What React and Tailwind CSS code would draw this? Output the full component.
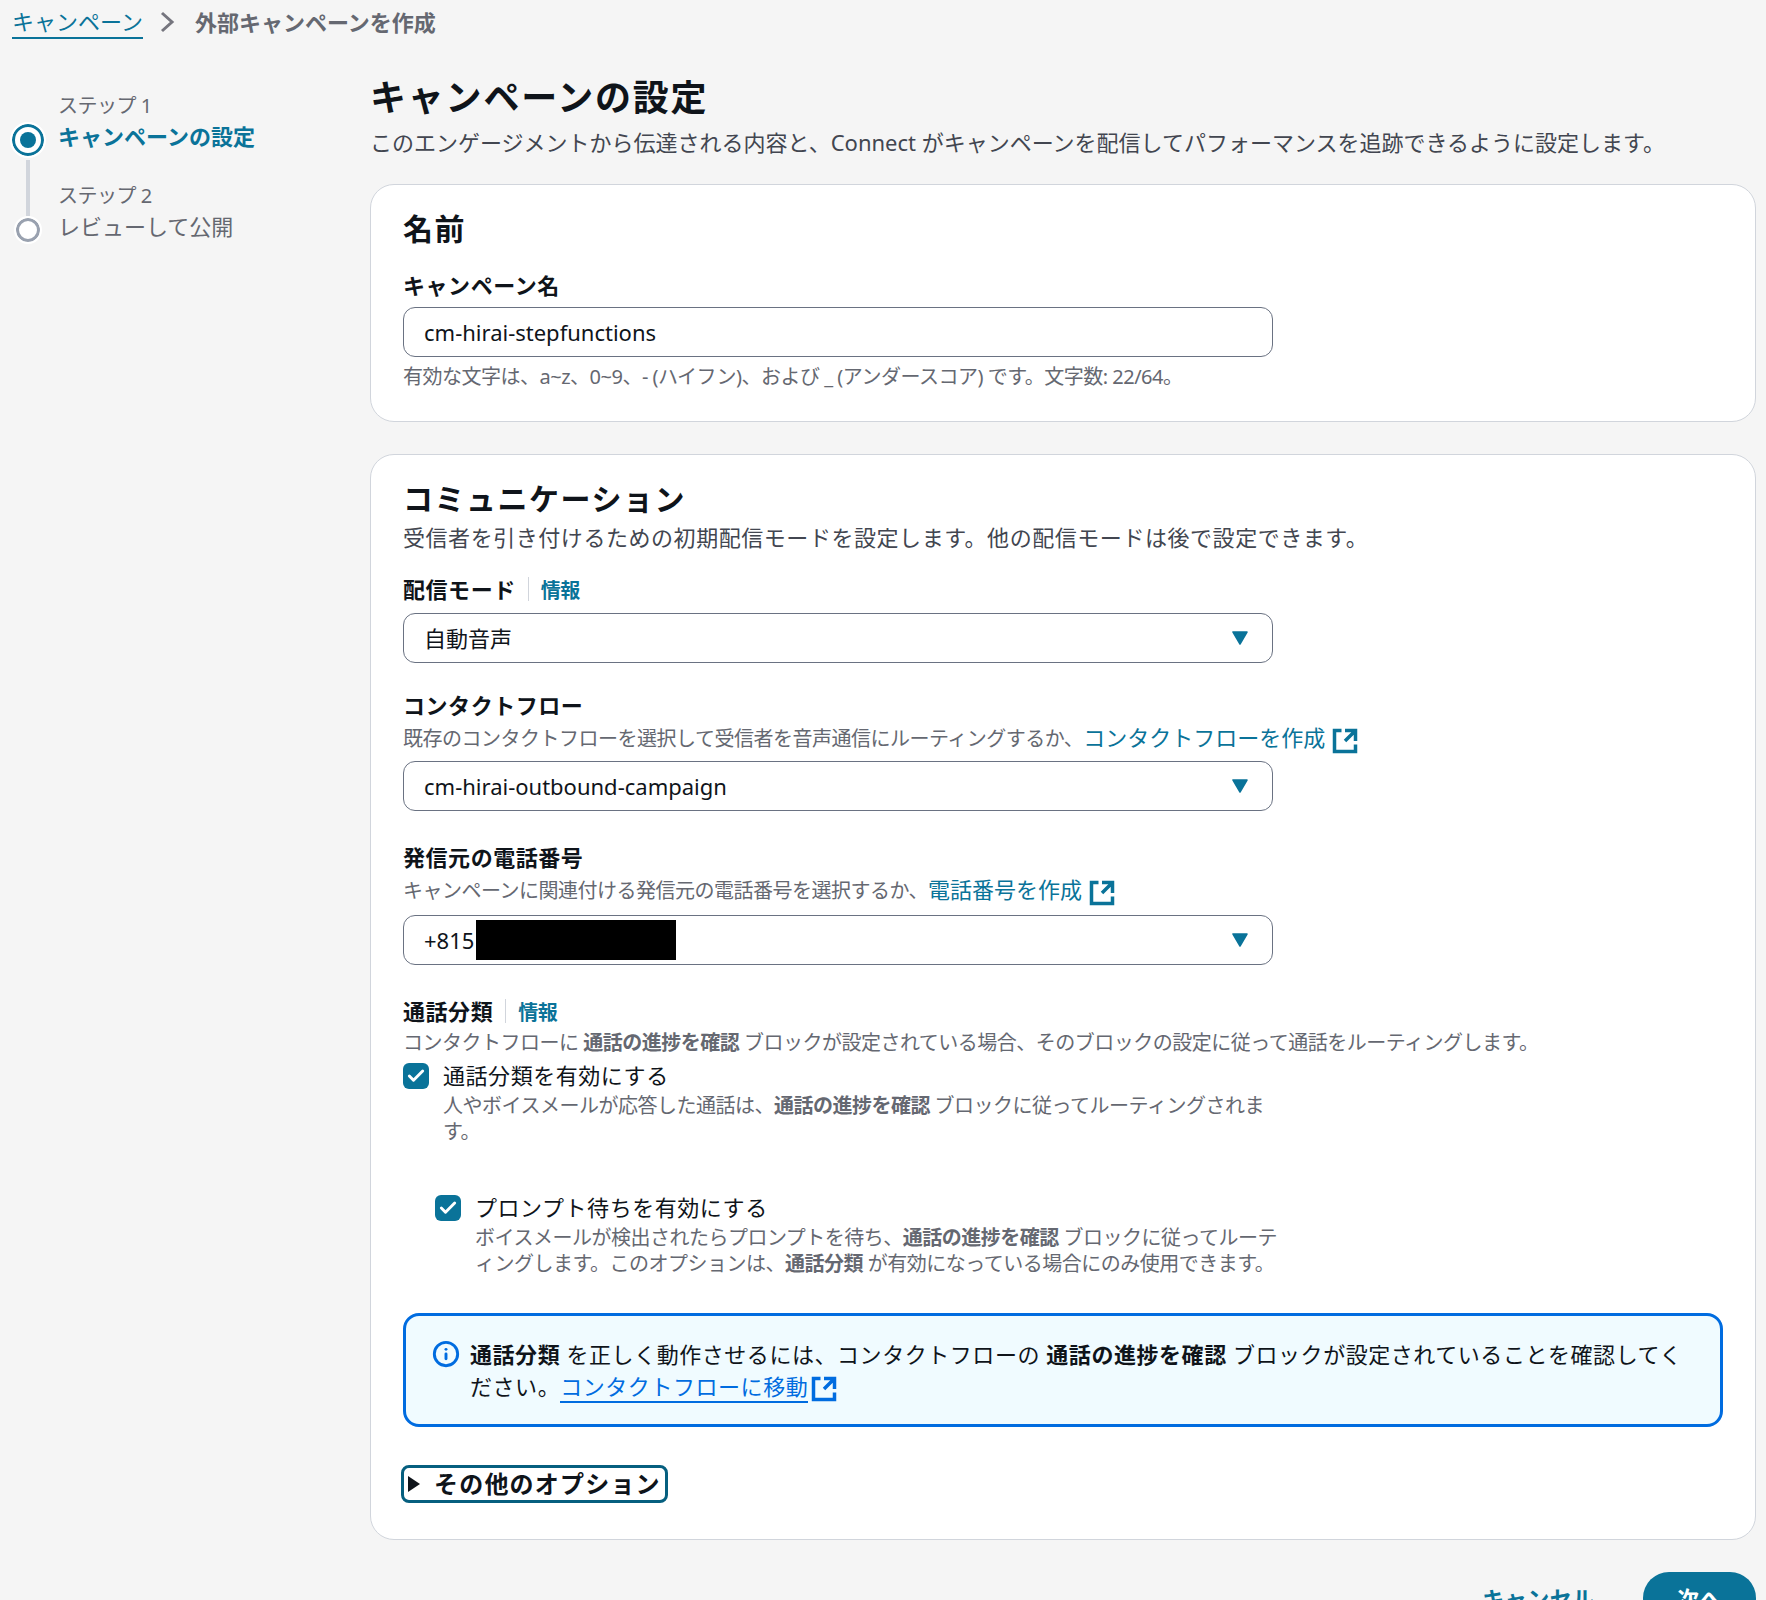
import { Check, Info } from "lucide-react";

// the screenshot is a scaled one, so its base text sits between text-xl and text-2xl
const bodyText = "text-[22px] leading-7 tracking-wide";
const smallText = "text-xl leading-6 tracking-tight text-[#656871]";
const labelText = "text-[22px] leading-7 font-bold tracking-wide text-[#0f141a]";

const ExternalIcon = ({ className }) => (
  <svg viewBox="0 0 16 16" fill="none" stroke="currentColor" strokeWidth={2} className={`-my-1 inline size-7 ${className}`} aria-hidden="true">
    <path d="M14 8.01v-6H8M14.02 2 8 8.02M6 2.01H2v12h12v-3.99" />
  </svg>
);

const Caret = () => (
  <svg viewBox="0 0 16 14" className="mr-1 h-3.5 w-4 shrink-0 fill-[#0a7399]" aria-hidden="true">
    <path d="M1 1h14L8 13z" stroke="#0a7399" strokeWidth={1.5} strokeLinejoin="round" />
  </svg>
);

const Select = ({ children }) => (
  <div className="flex items-center justify-between rounded-xl border border-gray-500 bg-white px-5 py-2.5 text-[22px] leading-7 text-[#0f141a]">
    <span>{children}</span>
    <Caret />
  </div>
);

const InfoLabel = ({ children }) => (
  <div className="flex items-center">
    <span className={labelText}>{children}</span>
    <span className="ml-3 flex h-6 items-center border-l border-gray-300 pt-1 pl-3 text-xl font-bold tracking-tight text-[#0a7399]">情報</span>
  </div>
);

const Checkbox = () => (
  <span className="mt-0.5 flex size-6.5 shrink-0 items-center justify-center rounded-md bg-[#0a7399] text-white">
    <Check size={20} strokeWidth={3.5} />
  </span>
);

const Stepper = () => (
  <div className="flex gap-3.5 pt-12">
    <div className="flex w-8 flex-col items-center pt-8">
      <span className="flex size-8 items-center justify-center rounded-full border-3 border-[#0a7399] bg-white outline-2 outline-white">
        <span className="size-4 rounded-full bg-[#0a7399]" />
      </span>
      <span className="mt-1 h-14 w-1 bg-gray-300" />
      <span className="mt-0.5 size-6 rounded-full border-3 border-gray-400 bg-white outline-2 outline-white" />
    </div>
    <div>
      <div className="text-xl leading-7 tracking-tight text-[#656871]">ステップ 1</div>
      <div className="mt-0.5 text-[22px] leading-7 font-bold text-[#0a7399]">キャンペーンの設定</div>
      <div className="mt-8 text-xl leading-7 tracking-tight text-[#656871]">ステップ 2</div>
      <div className="mt-0.5 text-[22px] leading-7 text-[#656871]">レビューして公開</div>
    </div>
  </div>
);

const App = () => {
  return (
    <div className="h-screen overflow-hidden bg-neutral-100 pr-2.5 pl-3 font-['Noto_Sans','Noto_Sans_CJK_JP',sans-serif]">
      <nav className="flex h-11 items-center text-[22px] leading-7">
        <a className="border-b-2 border-[#0a7399] leading-8 text-[#0a7399]">キャンペーン</a>
        <svg viewBox="0 0 16 24" fill="none" stroke="#75757e" strokeWidth={3} className="mr-5 ml-4 h-6 w-4" aria-hidden="true">
          <path d="M3 3l10 9-10 9" />
        </svg>
        <span className="font-bold text-[#656871]">外部キャンペーンを作成</span>
      </nav>

      <div className="flex gap-2.5">
        <aside className="w-87 shrink-0">
          <Stepper />
        </aside>

        <main className="flex-1 pt-8.5">
          <h1 className="text-4xl font-bold tracking-wider text-[#0f141a]">キャンペーンの設定</h1>
          <p className="mt-2.5 text-[22px] leading-7 text-[#424650]">
            このエンゲージメントから伝達される内容と、Connect がキャンペーンを配信してパフォーマンスを追跡できるように設定します。
          </p>

          <section className="mt-7 rounded-3xl border border-gray-300 bg-white px-8 pt-6.5 pb-8">
            <h2 className="text-3xl leading-9 font-bold tracking-wider text-[#0f141a]">名前</h2>
            <div className="mt-6 max-w-[870px]">
              <div className={labelText}>キャンペーン名</div>
              <div className="mt-2 rounded-xl border border-gray-500 bg-white px-5 py-2.5 text-[22px] leading-7 text-[#0f141a]">
                cm-hirai-stepfunctions
              </div>
              <p className={`mt-2 ${smallText}`}>
                有効な文字は、a~z、0~9、- (ハイフン)、および _ (アンダースコア) です。文字数: 22/64。
              </p>
            </div>
          </section>

          <section className="mt-8 rounded-3xl border border-gray-300 bg-white px-8 pt-6.5 pb-9">
            <h2 className="text-3xl leading-9 font-bold tracking-wider text-[#0f141a]">コミュニケーション</h2>
            <p className={`mt-1.5 text-[#424650] ${bodyText}`}>
              受信者を引き付けるための初期配信モードを設定します。他の配信モードは後で設定できます。
            </p>

            <div className="max-w-[870px]">
              <div className="mt-6">
                <InfoLabel>配信モード</InfoLabel>
              </div>
              <div className="mt-2.5">
                <Select>自動音声</Select>
              </div>

              <div className={`mt-7 ${labelText}`}>コンタクトフロー</div>
              <p className={`mt-1.5 whitespace-nowrap ${smallText}`}>
                既存のコンタクトフローを選択して受信者を音声通信にルーティングするか、
                <a className="text-[22px] tracking-normal text-[#0a7399]">コンタクトフローを作成</a>
                <ExternalIcon className="ml-1.5 text-[#0a7399]" />
              </p>
              <div className="mt-2.5">
                <Select>cm-hirai-outbound-campaign</Select>
              </div>

              <div className={`mt-8 ${labelText}`}>発信元の電話番号</div>
              <p className={`mt-1.5 whitespace-nowrap ${smallText}`}>
                キャンペーンに関連付ける発信元の電話番号を選択するか、
                <a className="text-[22px] tracking-normal text-[#0a7399]">電話番号を作成</a>
                <ExternalIcon className="ml-1.5 text-[#0a7399]" />
              </p>
              <div className="mt-3">
                <Select>
                  <span className="relative">
                    +815
                    <span className="absolute top-1/2 left-13 h-10 w-50 -translate-y-1/2 bg-black" />
                  </span>
                </Select>
              </div>

              <div className="mt-8">
                <InfoLabel>通話分類</InfoLabel>
              </div>
            </div>

            <p className={`mt-1.5 ${smallText}`}>
              コンタクトフローに <b>通話の進捗を確認</b> ブロックが設定されている場合、そのブロックの設定に従って通話をルーティングします。
            </p>

            <div className="mt-1.5 flex max-w-[870px] gap-3.5">
              <Checkbox />
              <div>
                <div className={`text-[#0f141a] ${bodyText}`}>通話分類を有効にする</div>
                <p className={`mt-1 whitespace-nowrap ${smallText} leading-6.5`}>
                  人やボイスメールが応答した通話は、<b>通話の進捗を確認</b> ブロックに従ってルーティングされま
                  <br />
                  す。
                </p>
              </div>
            </div>

            <div className="mt-12 flex max-w-[870px] gap-3.5 pl-8">
              <Checkbox />
              <div>
                <div className={`text-[#0f141a] ${bodyText}`}>プロンプト待ちを有効にする</div>
                <p className={`mt-1 whitespace-nowrap ${smallText} leading-6.5`}>
                  ボイスメールが検出されたらプロンプトを待ち、<b>通話の進捗を確認</b> ブロックに従ってルーテ
                  <br />
                  ィングします。このオプションは、<b>通話分類</b> が有効になっている場合にのみ使用できます。
                </p>
              </div>
            </div>

            <div className="mt-9 flex gap-2.5 rounded-2xl border-3 border-[#006ce0] bg-[#f0fbff] py-5.5 pl-6.5">
              <Info size={28} strokeWidth={2.5} className="mt-0.5 shrink-0 text-[#006ce0]" />
              <p className="text-[22px] leading-8 tracking-wide text-[#0f141a]">
                <b>通話分類</b> を正しく動作させるには、コンタクトフローの <b>通話の進捗を確認</b> ブロックが設定されていることを確認してく
                <br />
                ださい。
                <a className="border-b-2 border-[#006ce0] text-[#006ce0]">コンタクトフローに移動</a>
                <ExternalIcon className="ml-0.5 text-[#006ce0]" />
              </p>
            </div>

            <button type="button" className="mt-9.5 -ml-0.5 flex h-9.5 items-center gap-3.5 rounded-lg border-3 border-[#065f7f] pr-1 pl-1 text-2xl font-bold tracking-wider text-[#0f141a]">
              <svg viewBox="0 0 12 16" className="h-4 w-3 fill-[#0f141a]" aria-hidden="true">
                <path d="M0 0l12 8-12 8z" />
              </svg>
              その他のオプション
            </button>
          </section>

          <div className="mt-8 flex items-center justify-end gap-12">
            <a className={`font-bold text-[#0a7399] ${bodyText}`}>キャンセル</a>
            <button type="button" className={`h-13 rounded-full bg-[#0a7399] px-8.5 font-bold text-white ${bodyText}`}>次へ</button>
          </div>
        </main>
      </div>
    </div>
  );
};

export default App;
